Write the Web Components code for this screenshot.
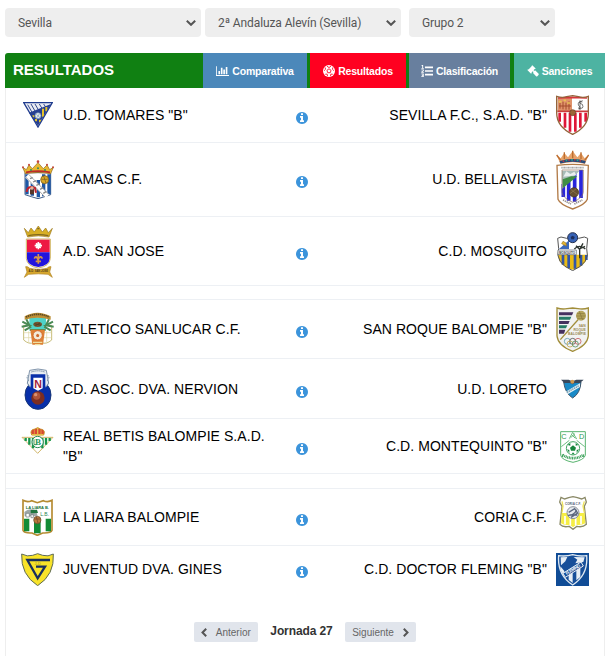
<!DOCTYPE html>
<html lang="es">
<head>
<meta charset="utf-8">
<title>Resultados</title>
<style>
    body {
        margin: 0;
        background: #fff;
        font-family: "Liberation Sans", Arial, sans-serif;
        overflow: hidden;
    }
</style>
</head>
<body>
<app-resultados></app-resultados>

<script>
// Escudos: [ancho, alto, ajuste vertical, dibujo]; el dibujo usa 3 unidades por px
const ESCUDOS = {
    tomares: [30, 26, 0, `
        <path d="M2 2H88L45 75Z" fill="#e9ebf2"/>
        <path d="M14 8 30 36M24 6 40 34M36 6 50 30M49 6 60 24M62 6 70 18" stroke="#31488d" stroke-width="3"/>
        <path d="M84 6 18 32 45 71Z" fill="#263f91"/>
        <path d="M70 15V28M60 20V44M51 53V61M39 51V58M31 40V46" stroke="#e5c32a" stroke-width="6"/>
        <path d="M2 2H88L45 75Z" fill="none" stroke="#203c8e" stroke-width="4"/>
        <circle cx="45" cy="41" r="9" fill="#dce9f0" stroke="#6c86ac" stroke-width="2"/>
        <path d="M40 37 50 46M49 36 42 47" stroke="#7f94a6" stroke-width="2"/>`],
    camas: [32, 39, .5, `
        <path d="M9 38H86V104Q69 110 48 116 27 110 9 104Z" fill="#fff" stroke="#435f88" stroke-width="3"/>
        <path d="M15 43V103M31 65V107M49 60V112M65 43V109M81 43V103" stroke="#1e58a5" stroke-width="10"/>
        <path d="M15 47 76 109" stroke="#fff" stroke-width="15"/>
        <path d="M20 43 80 103M11 51 69 111" stroke="#777" stroke-width="2"/>
        <path d="M24 56 32 53M33 66 43 62M43 76 53 72M54 88 64 83M64 100 73 94" stroke="#888" stroke-width="4"/>
        <circle cx="68" cy="59" r="12" fill="#d9a928" stroke="#705319" stroke-width="2"/>
        <path d="M58 58H77M65 48 72 69" stroke="#795b1e" stroke-width="2"/>
        <path d="M14 96Q16 75 39 84L42 98" fill="none" stroke="#bf222c" stroke-width="6"/>
        <path d="M24 88H36V103H24Z" fill="#563629"/><circle cx="30" cy="84" r="5" fill="#e8b393"/>
        <path d="M2 22 13 29 21 15 31 26 48 8 64 26 75 15 83 29 94 22 86 41Q48 34 10 41Z" fill="#e8b930" stroke="#8b6419" stroke-width="2"/>
        <path d="M12 37Q48 30 84 37" fill="none" stroke="#bd2c2b" stroke-width="5"/>
        <g fill="#c4473b"><circle cx="3" cy="22" r="3"/><circle cx="21" cy="14" r="3"/><circle cx="48" cy="5" r="4"/><circle cx="75" cy="14" r="3"/><circle cx="93" cy="22" r="3"/></g>
        <g fill="#358c5c"><circle cx="27" cy="30" r="3"/><circle cx="48" cy="25" r="3"/><circle cx="69" cy="30" r="3"/></g>`],
    sanjose: [30, 53, 0, `
        <path d="M10 42H82V100Q80 124 46 129 12 124 10 100Z" fill="#fff" stroke="#d2b765" stroke-width="3"/>
        <path d="M12 44H80V82H12Z" fill="#ed1944"/>
        <path d="M12 82H80V101Q78 122 46 126 14 122 12 101Z" fill="#2214dd"/>
        <path d="M46 51V73M35 62H57M39 55 53 69M53 55 39 69" stroke="#fff" stroke-width="5"/>
        <path d="M46 87V116M34 101Q39 89 45 104 53 89 58 101M38 109H54" fill="none" stroke="#d79545" stroke-width="5"/>
        <path d="M4 10 16 23 24 9 34 21 46 3 58 21 68 9 76 23 88 10 78 36Q46 29 14 36Z" fill="#d8af24" stroke="#9a771b" stroke-width="2"/>
        <path d="M16 32Q46 26 76 32M43 11H49" fill="none" stroke="#80681f" stroke-width="4"/>
        <path d="M8 125Q15 124 20 130 46 137 72 130 77 124 84 125L80 141 88 157 75 148Q46 145 17 148L4 157 12 141Z" fill="#d7a72d" stroke="#b18423" stroke-width="2"/>
        <text x="46" y="142" text-anchor="middle" font-size="8" font-weight="bold" fill="#4c3916">A.D. SAN JOSE</text>`],
    sanlucar: [33, 34, 0, `
        <path d="M8 40H38V92Q24 98 8 84ZM62 40H92V84Q76 98 62 92Z" fill="#fff" stroke="#c8bd79" stroke-width="3"/>
        <path d="M9 62H38M9 77H38M62 62H91M62 77H91M23 58V92M77 58V92" stroke="#ded6a4" stroke-width="2"/>
        <path d="M25 16H75V56H25Z" fill="#4fd2c7"/>
        <path d="M11 13Q49-9 89 13V23Q49 11 11 23Z" fill="#bc8e35"/>
        <path d="M15 15Q50-1 85 15" fill="none" stroke="#594723" stroke-width="5" stroke-dasharray="4 2"/>
        <g stroke="#4a8a55" stroke-width="6" fill="none"><path d="M4 29 25 40 2 44M16 22 28 45 11 55M96 29 75 40 98 44M84 22 72 45 89 55M27 54H73"/></g>
        <ellipse cx="50" cy="37" rx="13" ry="8" fill="#77552f"/><path d="M40 35 60 40M43 41 57 33" stroke="#4a4028" stroke-width="3"/>
        <path d="M28 53H72L66 98H34Z" fill="#dd8135"/>
        <circle cx="50" cy="70" r="14" fill="#f2ead8" stroke="#d96929" stroke-width="3"/>
        <path d="M50 65 55 69 53 75H47L45 69Z" fill="#cf692c"/>
        <path d="M36 91H64M42 98H58" stroke="#eee0a3" stroke-width="4"/>`],
    nervion: [28, 42, 0, `
        <ellipse cx="42" cy="81" rx="39" ry="43" fill="#082fa9" stroke="#183778" stroke-width="3"/>
        <path d="M17 7Q42-1 67 7L74 46Q70 54 64 57H20Q14 54 10 46Z" fill="#e8edf2" stroke="#8497ad" stroke-width="3"/>
        <path d="M20 19H64V58L54 70H30L20 58Z" fill="#082fa9"/><path d="M28 29H56V61L42 68 28 61Z" fill="#fff"/>
        <text x="42" y="59" text-anchor="middle" font-size="34" font-weight="bold" textLength="23" lengthAdjust="spacingAndGlyphs" fill="#a41c3e">N</text>
        <path d="M22 12Q42 5 62 12M13 21Q5 31 15 36 6 43 15 51M71 21Q79 31 69 36 78 43 69 51" fill="none" stroke="#71889e" stroke-width="3" stroke-dasharray="4 2"/>
        <circle cx="42" cy="90" r="20" fill="#7c2d21"/><circle cx="38" cy="84" r="11" fill="#af5439"/><circle cx="35" cy="80" r="5" fill="#da9272"/>`],
    betis: [33, 27, -6, `
        <path d="M3 31H96L50 79Z" fill="#fff" stroke="#d0b568" stroke-width="3"/>
        <path d="M14 33V42M25 33V53M36 33V64M64 33V64M75 33V53M86 33V42" stroke="#15964b" stroke-width="7"/>
        <circle cx="50" cy="45" r="17" fill="#fff" stroke="#298a50" stroke-width="3"/>
        <text x="51" y="54" text-anchor="middle" font-family="Liberation Serif, serif" font-size="27" font-weight="bold" fill="#2b9757">B</text>
        <path d="M39 37V53M39 53H46" stroke="#35955a" stroke-width="3"/>
        <path d="M32 24Q25 8 42 6L50 2 58 6Q75 8 68 24Z" fill="#d94533" stroke="#c9912a" stroke-width="3"/>
        <path d="M33 23H67M50 2V21" stroke="#e4bb45" stroke-width="4"/>
        <path d="M40 9V22M60 9V22" stroke="#e4bb45" stroke-width="2"/>`],
    laliara: [31, 37, 0, `
        <path d="M3 4Q16 11 29 5L46 11 64 5Q78 11 90 4V94Q87 103 62 102L46 109 30 102Q6 103 3 94Z" fill="#fff" stroke="#b58b32" stroke-width="5"/>
        <path d="M6 59H22V97H6ZM36 59H56V103H36ZM71 59H87V97H71Z" fill="#128b36"/>
        <text x="46" y="29" text-anchor="middle" font-size="12" font-weight="bold" textLength="69" fill="#18733b">LA LIARA B.</text>
        <path d="M7 39Q20 26 42 34L47 52H8Z" fill="#9ea8a8"/><path d="M26 33 45 32 48 42 26 43Z" fill="#217640"/>
        <path d="M12 43H22V54H12ZM27 47H34V56H27Z" fill="#fff" stroke="#687374" stroke-width="2"/>
        <text x="68" y="52" text-anchor="middle" font-size="15" fill="#258554">L.B.</text>
        <circle cx="46" cy="63" r="11" fill="#bd793e" stroke="#5f472c" stroke-width="2"/><path d="M37 60H55M43 53 48 73" stroke="#6b462a" stroke-width="2"/>`],
    gines: [33, 33, .5, `
        <path d="M2 3Q19 12 35 7L50 2 65 7Q81 12 97 3 101 65 50 98-1 65 2 3Z" fill="#f8e329" stroke="#5e6b56" stroke-width="3"/>
        <path d="M87 21H19L50 76 72 41H45" fill="none" stroke="#192f5d" stroke-width="7"/>
        <text x="50" y="36" text-anchor="middle" font-size="12" fill="#a09026">J-D</text>`],
    sevilla: [33, 40, 0, `
        <path d="M2 4Q19 10 32 5L50 2 67 5Q82 10 97 4V53Q98 95 50 118 2 95 2 53Z" fill="#fff"/>
        <path d="M11 53V80M27 53V98M42 53V110M58 53V110M73 53V98M89 53V80" stroke="#df1737" stroke-width="8"/>
        <path d="M5 10 48 7V48H5Z" fill="#e0936a"/>
        <path d="M6 9 48 7 93 9" fill="none" stroke="#d8343b" stroke-width="5"/>
        <path d="M12 24V41M21 20V43M30 23V44M39 19V44M9 33H45" stroke="#a34a2c" stroke-width="3"/>
        <path d="M8 20H17M23 16H30M34 24H42" stroke="#e8c252" stroke-width="5"/>
        <path d="M4 49H96" stroke="#c93b3b" stroke-width="5"/>
        <path d="M79 21Q65 17 67 30 76 37 69 43M66 39Q86 44 79 28 63 23 80 17M72 16V45" fill="none" stroke="#333" stroke-width="2"/>
        <circle cx="50" cy="53" r="9" fill="#9c6536" stroke="#653d25" stroke-width="2"/>
        <path d="M2 4Q19 10 32 5L50 2 67 5Q82 10 97 4V53Q98 95 50 118 2 95 2 53Z" fill="none" stroke="#94643b" stroke-width="4"/>`],
    bellavista: [33, 61, .5, `
        <path d="M3 49Q49 43 97 49L94 151Q88 167 50 180 12 167 6 151Z" fill="#fff" stroke="#b27b48" stroke-width="4"/>
        <path d="M22 105V144M38 90V155M56 67V158M75 63V147" stroke="#2925dc" stroke-width="11"/>
        <path d="M18 66H70L18 120Z" fill="#a8bcb8"/><path d="M20 91 46 82 64 82 20 118Z" fill="#3f8d45"/>
        <path d="M22 83 31 67 43 75 55 68 61 79" fill="#e9eeee"/>
        <path d="M18 63H82V130Q80 147 50 160 20 147 18 130Z" fill="none" stroke="#8c6d56" stroke-width="2"/>
        <circle cx="54" cy="130" r="14" fill="#665032" stroke="#433321" stroke-width="2"/><path d="M44 121 65 137M42 134 61 119" stroke="#947d54" stroke-width="2"/>
        <path d="M16 56H84" stroke="#a5a4a3" stroke-width="5" stroke-dasharray="3 1"/>
        <path d="M21 153 45 165M55 165 79 153" stroke="#99928c" stroke-width="5" stroke-dasharray="4 2"/>
        <path d="M2 18 14 28 25 12 36 25 50 6 64 25 75 12 86 28 98 18 87 45Q50 34 13 45Z" fill="#e7a36a"/>
        <path d="M2 18 14 34M25 10V30M50 5V28M75 10V30M98 18 86 34" stroke="#bd6d2f" stroke-width="4"/>
        <path d="M12 40Q50 28 88 40" fill="none" stroke="#26477c" stroke-width="8"/>
        <path d="M20 37Q50 28 80 37" fill="none" stroke="#cf3b36" stroke-width="4" stroke-dasharray="5 12"/>
        <path d="M29 35Q50 29 80 37" fill="none" stroke="#2ba386" stroke-width="5" stroke-dasharray="5 12"/>`],
    mosquito: [33, 39, 0, `
        <path d="M5 19 15 15 32 19 50 11 68 19 85 15 95 19 92 50Q105 92 50 116-5 92 8 50Z" fill="#fff"/>
        <path d="M6 68H94Q92 102 50 113 8 102 6 68Z" fill="#e8ba15"/>
        <path d="M21 69V98M38 69V108M57 69V110M75 69V101M91 69V84" stroke="#3155a9" stroke-width="8"/>
        <path d="M5 19 15 15 32 19 50 11 68 19 85 15 95 19 92 50Q105 92 50 116-5 92 8 50Z" fill="none" stroke="#555" stroke-width="3"/>
        <path d="M9 51 39 25V51Z" fill="#3b68ba"/>
        <path d="M17 35 21 28 30 33 31 42Z" fill="#e8b72e" stroke="#98782a" stroke-width="2"/>
        <path d="M71 52V79M55 51Q70 35 88 51M60 41 71 52 81 34M70 51 87 43" fill="none" stroke="#2d342f" stroke-width="4"/>
        <path d="M6 54H61V68H6Z" fill="#fff" stroke="#4e5965" stroke-width="2"/>
        <text x="33" y="66" text-anchor="middle" font-size="13" font-weight="bold" textLength="48" lengthAdjust="spacingAndGlyphs" fill="#303840">MOSQUITO</text>
        <circle cx="50" cy="17" r="15" fill="#3762b5" stroke="#26314d" stroke-width="3"/><path d="M50 11 56 15 54 22H46L44 15Z" fill="#1b2d5b"/>`],
    sanroque: [33, 45, 0, `
        <path d="M3 3Q18 8 33 5L50 3 66 5Q82 8 97 3V87Q94 116 50 133 6 116 3 87Z" fill="#f1f2f2" stroke="#a28e3a" stroke-width="4"/>
        <g fill="#45315f"><path d="M9 16H52L48 25H9ZM9 42H41L37 51H9ZM9 68H28L24 80H9Z"/></g>
        <g fill="#257b66"><path d="M9 29H46L42 38H9ZM9 55H34L30 64H9Z"/></g>
        <path d="M76 27 13 98" stroke="#a28e3a" stroke-width="4"/>
        <circle cx="75" cy="26" r="15" fill="#b5a55c"/><path d="M63 20H86M61 27H88M64 34H85M70 13 80 39" stroke="#85753b" stroke-width="2"/>
        <g fill="#9a8950" font-size="10" font-weight="bold" text-anchor="end"><text x="89" y="60">SAN</text><text x="89" y="71">ROQUE</text><text x="90" y="84" textLength="54">BALOMPIE</text></g>
        <g fill="none" stroke-width="2.5"><circle cx="34" cy="103" r="9" stroke="#639cb0"/><circle cx="50" cy="103" r="9" stroke="#555"/><circle cx="66" cy="103" r="9" stroke="#c65d60"/><circle cx="42" cy="111" r="9" stroke="#c7aa51"/><circle cx="58" cy="111" r="9" stroke="#55946a"/></g>`],
    loreto: [23, 20, 0, `
        <path d="M8 9H60Q58 43 35 57 12 43 8 9Z" fill="#198ac7" stroke="#40566b" stroke-width="3"/>
        <path d="M14 38 57 13V24L20 46Z" fill="#e5eef1"/><path d="M18 40 54 20" stroke="#6692aa" stroke-width="4" stroke-dasharray="4 2"/>
        <path d="M0 2H23L34 7 46 2H68L57 12 41 12 35 16 27 12H10Z" fill="#39485b"/><circle cx="34" cy="8" r="6" fill="#cf9850"/>`],
    montequinto: [26, 32, 1, `
        <path d="M2 2H76V73Q72 87 39 94 5 87 2 73Z" fill="#fff" stroke="#58b46f" stroke-width="3"/>
        <text x="12" y="25" text-anchor="middle" font-size="22" fill="#2d9a50">C</text><text x="65" y="25" text-anchor="middle" font-size="22" fill="#2d9a50">D</text>
        <path d="M28 23 38 4 50 24M32 20 45 8M33 9 46 22M4 47 28 28M50 28 74 47" fill="none" stroke="#6dbd80" stroke-width="3"/>
        <circle cx="39" cy="52" r="20" fill="#fff" stroke="#42a764" stroke-width="3"/>
        <path d="M39 43 48 50 45 59H33L30 50ZM23 42 31 36 31 44ZM55 42 47 36 47 44ZM21 55 28 57 28 66ZM57 55 50 57 50 66ZM35 70 39 64 44 70Z" fill="#16863c"/>
        <path d="M8 72Q39 91 70 72" fill="none" stroke="#359d55" stroke-width="8" stroke-dasharray="3 2"/>
        <path d="M7 70V78M71 70V78" stroke="#359d55" stroke-width="3"/>`],
    coria: [28, 34, -4, `
        <path d="M6 4 17 9 29 5 42 2 55 5 68 9 78 4 82 18 76 31 82 85Q71 95 54 91L42 100 30 91Q12 95 3 85L9 31 2 18Z" fill="#fff" stroke="#8b8a68" stroke-width="4"/>
        <path d="M8 51H77L79 82Q66 89 51 86L42 94 33 86Q15 89 6 82Z" fill="#f6ee45"/>
        <path d="M18 60V85M34 60V87M50 60V87M66 60V85" stroke="#fff" stroke-width="5"/>
        <path d="M9 50 12 30 9 16M76 50 72 30 76 16" fill="none" stroke="#eee35b" stroke-width="4"/>
        <text x="42" y="26" text-anchor="middle" font-size="12" font-weight="bold" textLength="48" lengthAdjust="spacingAndGlyphs" fill="#546078">CORIA C.F.</text>
        <circle cx="42" cy="50" r="18" fill="#e7ebef" stroke="#8a8f98" stroke-width="3"/>
        <path d="M27 58Q46 58 53 41M29 49 47 38 56 51 36 64M31 57H55" fill="none" stroke="#5a667e" stroke-width="4"/>`],
    fleming: [33, 33, .5, `
        <path d="M0 0H99V99H0Z" fill="#104c96"/>
        <path d="M8 8Q30 11 50 5 70 11 92 8 97 66 50 96 3 66 8 8Z" fill="#174f99" stroke="#dfe9f2" stroke-width="4"/>
        <path d="M13 50V40L25 54V70ZM38 57 50 51V90L38 80ZM61 47 73 38V72L61 82Z" fill="#e8eff5"/>
        <path d="M14 13 34 12 28 25 15 37ZM53 12 86 13 82 27 58 31 64 20Z" fill="#e8eff5"/>
        <path d="M36 18 47 11 58 24 49 29 46 43H38L41 26Z" fill="#174f99"/>
        <path d="M21 61 75 27 82 39 28 73Z" fill="#174f99" stroke="#e8eff5" stroke-width="3"/>
        <text transform="translate(32 66) rotate(-32)" font-size="13" font-weight="bold" textLength="49" fill="#fff">FLEMING</text>`]
};

const ICONOS = {
    grafico: ['0 0 2048 1792', '<path d="M640 896v512h-256v-512h256zm384-512v1024h-256v-1024h256zm1024 1152v128h-2048v-1536h128v1408h1920zm-640-896v768h-256v-768h256zm384-384v1152h-256v-1152h256z"/>'],
    balon: ['0 0 14 14', '<circle cx="7" cy="7" r="7"/><path d="M7 4.4 9.4 6.2 8.5 9H5.5L4.6 6.2Z" fill="none" stroke="#ff0020" stroke-width="1"/><path d="M4.6 1.4 7 3 9.4 1.4M1.3 6.6 3 5 2.4 2.8M12.7 6.6 11 5 11.6 2.8M2.6 10.8 4.8 10.6 5.3 12.8M11.4 10.8 9.2 10.6 8.7 12.8" fill="none" stroke="#ff0020" stroke-width="1"/>'],
    lista: ['0 0 14 14', '<path d="M4.6 1.7H14V3.7H4.6ZM4.6 6H14V8H4.6ZM4.6 10.3H14V12.3H4.6ZM1 0H2.5V3.5H3.3V4.3H.5V3.5H1.4V1.2H.5ZM.4 5.2H3.3V7.1L1.7 8.3H3.3V9.1H.3V8L2.2 6.7V6H.4ZM.4 9.9H3.2V14H.3V13.1H2.1V12.4H1V11.5H2.1V10.8H.4Z"/>'],
    mazo: ['0 0 14 14', '<path d="M6.2.3 10.1 4.2 9.3 5 8.8 4.8 7.7 6 8.6 6.9 9.4 6.1 13.6 10.3Q14 11 13.4 11.8L12 13.2Q11.3 13.7 10.6 13.1L7 9.4 7.6 8.2 6.7 7.3 5.3 8.7 5.5 9.3 4.7 10.1.4 5.8 1.2 5 1.8 5.2 5.4 1.6 5.3 1.1Z"/>'],
    info: ['0 0 1792 1792', '<path d="M1152 1376v-160q0-14-9-23t-23-9h-96v-512q0-14-9-23t-23-9h-320q-14 0-23 9t-9 23v160q0 14 9 23t23 9h96v320h-96q-14 0-23 9t-9 23v160q0 14 9 23t23 9h448q14 0 23-9t9-23zm-128-896v-160q0-14-9-23t-23-9h-192q-14 0-23 9t-9 23v160q0 14 9 23t23 9h192q14 0 23-9t9-23zm640 416q0 209-103 385.5t-279.5 279.5-385.5 103-385.5-103-279.5-279.5-103-385.5 103-385.5 279.5-279.5 385.5-103 385.5 103 279.5 279.5 103 385.5z"/>'],
    abajo: ['0 0 10 6', '<path d="M.8.7 5 4.8 9.2.7" fill="none" stroke="currentColor" stroke-width="2"/>'],
    izquierda: ['0 0 6 9', '<path d="M5.2.7 1.5 4.5 5.2 8.3" fill="none" stroke="currentColor" stroke-width="2"/>'],
    derecha: ['0 0 6 9', '<path d="M.8.7 4.5 4.5.8 8.3" fill="none" stroke="currentColor" stroke-width="2"/>']
};

class IconoUi extends HTMLElement {
    constructor() {
        super();
        this.attachShadow({ mode: "open" });
    }

    connectedCallback() {
        const [caja, dibujo] = ICONOS[this.getAttribute("nombre")];
        this.shadowRoot.innerHTML = `
            <style>
                :host { display: inline-flex; flex: none; }
                svg { display: block; width: 100%; height: 100%; fill: currentColor; }
            </style>
            <svg viewBox="${caja}">${dibujo}</svg>
        `;
    }
}

class EscudoClub extends HTMLElement {
    constructor() {
        super();
        this.attachShadow({ mode: "open" });
    }

    connectedCallback() {
        const [ancho, alto, ajuste, dibujo] = ESCUDOS[this.getAttribute("club")];
        this.shadowRoot.innerHTML = `
            <style>
                :host { display: flex; flex: none; width: 33px; justify-content: center; }
                svg {
                    display: block;
                    margin-top: ${ajuste * 2}px;
                    font-family: "Liberation Sans", sans-serif;
                    letter-spacing: 0;
                }
            </style>
            <svg width="${ancho}" height="${alto}" viewBox="0 0 ${ancho * 3} ${alto * 3}">${dibujo}</svg>
        `;
    }
}

class SelectorFiltro extends HTMLElement {
    constructor() {
        super();
        this.attachShadow({ mode: "open" });
    }

    connectedCallback() {
        this.shadowRoot.innerHTML = `
            <style>
                :host {
                    display: flex;
                    box-sizing: border-box;
                    height: 29px;
                    padding: 0 5px 0 13px;
                    align-items: center;
                    justify-content: space-between;
                    background: #eee;
                    border-radius: 4px;
                    color: #555;
                    font: 12px Roboto, sans-serif;
                    letter-spacing: -.1px;
                    white-space: nowrap;
                }
                icono-ui { width: 10px; height: 6px; }
            </style>
            <span><slot></slot></span>
            <icono-ui nombre="abajo"></icono-ui>
        `;
    }
}

class PestanaMenu extends HTMLElement {
    constructor() {
        super();
        this.attachShadow({ mode: "open" });
    }

    connectedCallback() {
        this.shadowRoot.innerHTML = `
            <style>
                :host {
                    display: flex;
                    box-sizing: border-box;
                    padding-top: 1px;
                    align-items: center;
                    justify-content: center;
                    gap: 3px;
                    color: #fff;
                    font-size: 10.5px;
                    font-weight: bold;
                    letter-spacing: -.2px;
                    white-space: nowrap;
                }
                icono-ui { width: var(--icono, 12px); height: 12px; }
            </style>
            <icono-ui nombre="${this.getAttribute("icono")}"></icono-ui>
            <span><slot></slot></span>
        `;
    }
}

class FilaPartido extends HTMLElement {
    constructor() {
        super();
        this.attachShadow({ mode: "open" });
    }

    connectedCallback() {
        this.shadowRoot.innerHTML = `
            <style>
                :host {
                    display: grid;
                    box-sizing: border-box;
                    grid-template-columns: 33px 222px 1fr 222px 33px;
                    column-gap: 9px;
                    align-items: center;
                    padding: 0 15px;
                    border-bottom: 1px solid #edf0f4;
                    color: #000;
                    font-size: 14px;
                    letter-spacing: .06px;
                    line-height: 20px;
                }
                :host([impar]) { padding-bottom: 1px; }
                .visitante { text-align: right; }
                icono-ui {
                    width: 14px;
                    height: 14px;
                    margin: 6px 6px 0 0;
                    justify-self: center;
                    color: #3c94db;
                }
            </style>
            <escudo-club club="${this.getAttribute("local")}"></escudo-club>
            <span><slot name="local"></slot></span>
            <icono-ui nombre="info"></icono-ui>
            <span class="visitante"><slot name="visitante"></slot></span>
            <escudo-club club="${this.getAttribute("visitante")}"></escudo-club>
        `;
    }
}

class BotonJornada extends HTMLElement {
    constructor() {
        super();
        this.attachShadow({ mode: "open" });
    }

    connectedCallback() {
        const siguiente = this.hasAttribute("siguiente");
        this.shadowRoot.innerHTML = `
            <style>
                :host {
                    display: flex;
                    box-sizing: border-box;
                    height: 20px;
                    padding: 0 7px;
                    align-items: center;
                    justify-content: space-between;
                    flex-direction: ${siguiente ? "row-reverse" : "row"};
                    background: #e1e5ec;
                    border-radius: 2px;
                    color: #666;
                    font-size: 10px;
                    letter-spacing: 0;
                }
                span { padding-top: 2px; }
                icono-ui { width: 6px; height: 9px; color: #555; }
            </style>
            <icono-ui nombre="${siguiente ? "derecha" : "izquierda"}"></icono-ui>
            <span><slot></slot></span>
        `;
    }
}

// Cada partido: alto de fila, escudo y nombre local, escudo y nombre visitante
const PARTIDOS = [
    [55, "tomares", 'U.D. TOMARES "B"', "sevilla", 'SEVILLA F.C., S.A.D. "B"'],
    [74, "camas", "CAMAS C.F.", "bellavista", "U.D. BELLAVISTA"],
    [69, "sanjose", "A.D. SAN JOSE", "mosquito", "C.D. MOSQUITO"],
    null,
    [59, "sanlucar", "ATLETICO SANLUCAR C.F.", "sanroque", 'SAN ROQUE BALOMPIE "B"'],
    [60, "nervion", "CD. ASOC. DVA. NERVION", "loreto", "U.D. LORETO"],
    [55, "betis", 'REAL BETIS BALOMPIE S.A.D. "B"', "montequinto", 'C.D. MONTEQUINTO "B"'],
    null,
    [57, "laliara", "LA LIARA BALOMPIE", "coria", "CORIA C.F."],
    [48, "gines", "JUVENTUD DVA. GINES", "fleming", 'C.D. DOCTOR FLEMING "B"']
];

class AppResultados extends HTMLElement {
    constructor() {
        super();
        this.attachShadow({ mode: "open" });
    }

    connectedCallback() {
        const filas = PARTIDOS.map(p => p ? `
            <fila-partido local="${p[1]}" visitante="${p[3]}" ${p[0] === 74 || p[0] === 48 ? "impar" : ""} style="height: ${p[0]}px">
                <span slot="local">${p[2]}</span>
                <span slot="visitante">${p[4]}</span>
            </fila-partido>` : `<div class="hueco"></div>`).join("");

        this.shadowRoot.innerHTML = `
            <style>
                :host {
                    display: flex;
                    flex-direction: column;
                    box-sizing: border-box;
                    width: 613px;
                    height: 656px;
                    padding: 8px 8px 0 5px;
                }
                .filtros {
                    display: grid;
                    grid-template-columns: 196px 196px 146px;
                    column-gap: 4px;
                }
                .filtros :last-child { margin-left: 4px; margin-right: -4px; }
                header {
                    display: grid;
                    grid-template-columns: 198px 104px 3px 96px 3px 101px 4px 91px;
                    height: 35px;
                    margin-top: 16px;
                    background: #108012;
                    border-radius: 3px 0 0 0;
                }
                h1 {
                    margin: 0;
                    padding-left: 8px;
                    color: #fff;
                    font-size: 15px;
                    line-height: 34px;
                }
                .panel {
                    flex: 1;
                    border: solid #eee;
                    border-width: 0 1px;
                }
                .panel fila-partido:last-of-type { border-bottom-color: transparent; }
                .hueco { height: 14px; box-sizing: border-box; border-bottom: 1px solid #edf0f4; }
                .hueco:nth-of-type(2) { height: 15px; }
                nav {
                    display: flex;
                    justify-content: center;
                    margin-top: 28px;
                    gap: 12.5px;
                    color: #333;
                    font-size: 12px;
                    font-weight: bold;
                    letter-spacing: -.1px;
                    line-height: 18px;
                }
                nav boton-jornada { font-weight: normal; }
            </style>
            <div class="filtros">
                <selector-filtro>Sevilla</selector-filtro>
                <selector-filtro>2ª Andaluza Alevín (Sevilla)</selector-filtro>
                <selector-filtro>Grupo 2</selector-filtro>
            </div>
            <header>
                <h1>RESULTADOS</h1>
                <pestana-menu icono="grafico" style="background: #4b88ba; --icono: 13px">Comparativa</pestana-menu>
                <i></i>
                <pestana-menu icono="balon" style="background: #ff0020">Resultados</pestana-menu>
                <i></i>
                <pestana-menu icono="lista" style="background: #687f9e">Clasificación</pestana-menu>
                <i></i>
                <pestana-menu icono="mazo" style="background: #4db3a2">Sanciones</pestana-menu>
            </header>
            <div class="panel">
                ${filas}
                <nav>
                    <boton-jornada style="width: 64px">Anterior</boton-jornada>
                    <span>Jornada 27</span>
                    <boton-jornada siguiente style="width: 71px">Siguiente</boton-jornada>
                </nav>
            </div>
        `;
    }
}

customElements.define("icono-ui", IconoUi);
customElements.define("escudo-club", EscudoClub);
customElements.define("selector-filtro", SelectorFiltro);
customElements.define("pestana-menu", PestanaMenu);
customElements.define("fila-partido", FilaPartido);
customElements.define("boton-jornada", BotonJornada);
customElements.define("app-resultados", AppResultados);
</script>
</body>
</html>
